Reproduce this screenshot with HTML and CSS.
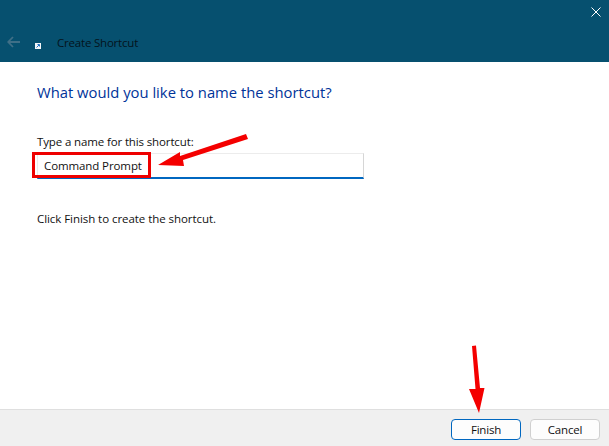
FILE: index.html
```html
<!DOCTYPE html>
<html lang="en">
<head>
    <meta charset="UTF-8">
    <meta name="viewport" content="width=device-width, initial-scale=1.0">
    <title>Create Shortcut</title>
    <link rel="stylesheet" href="styles.css">
</head>
<body>
    <header class="titlebar">
        <div class="close-row">
            <svg class="close-icon" width="10" height="10" viewBox="0 0 10 10"><path d="M0.5 0.5L9.5 9.5M9.5 0.5L0.5 9.5" stroke="#fff" stroke-width="1" fill="none"/></svg>
        </div>
        <div class="nav-row">
            <svg class="back-icon" width="13" height="12" viewBox="0 0 13 12"><path d="M6 1L1.200 6L6 11M1.200 6H13" stroke="#3f6f87" stroke-width="1.800" fill="none"/></svg>
            <svg class="app-icon" width="6" height="6" viewBox="0 0 6 6"><rect width="6" height="6" fill="#f4f6f8"/><path d="M1.500 4.500L4 2M2.500 1.500H4.500V3.500" stroke="#1b6fc2" stroke-width="1" fill="none"/></svg>
            <span class="window-title">Create Shortcut</span>
        </div>
    </header>

    <main class="content">
        <h1>What would you like to name the shortcut?</h1>
        <label class="name-label" for="name">Type a name for this shortcut:</label>
        <input class="name-input" type="text" id="name" value="Command Prompt">
        <p class="hint">Click Finish to create the shortcut.</p>
    </main>

    <footer class="actions">
        <button class="btn btn-default">Finish</button>
        <button class="btn">Cancel</button>
    </footer>

    <!-- red annotations on top of the dialog -->
    <div class="highlight"></div>
    <svg class="marks" width="609" height="446" viewBox="0 0 609 446">
        <path d="M246 134L248 139L183 160L184 166L158 165L180 152L180 156Z" fill="#f40000"/>
        <path d="M472 346L476 345.500L480 388L484.500 388L479 413L469 389L475.500 389Z" fill="#f40000"/>
    </svg>
</body>
</html>
```

FILE: styles.css
```css
body {
    font-family: "Open Sans", "Noto Sans", sans-serif;
    margin: 0;
    padding: 0;
    display: flex;
    flex-direction: column;
    height: 446px;
    overflow: hidden;
    background-color: #fff;
    color: #111;
}
.titlebar {
    height: 62px;
    display: flex;
    flex-direction: column;
    justify-content: space-between;
    background-color: #06506f;
    padding: 7px 8px 13px 7px;
    box-sizing: border-box;
}
.close-row {
    display: flex;
    justify-content: flex-end;
}
.nav-row {
    display: flex;
    align-items: center;
    height: 14px;
}
.back-icon {
    margin-right: 15px;
}
.app-icon {
    margin-top: 8px;
    margin-right: 16px;
}
.window-title {
    font-size: 11.500px;
    letter-spacing: -0.200px;
    color: #04131c;
}
.content {
    flex: 1;
    padding: 20px 0 0 37px;
}
h1 {
    font-size: 14.800px;
    font-weight: 400;
    color: #003399;
    margin: 0 0 32px;
    line-height: 20px;
}
.name-label {
    display: block;
    font-size: 11.500px;
    letter-spacing: -0.130px;
    line-height: 16px;
    margin-bottom: 3px;
}
.name-input {
    display: block;
    width: 327px;
    height: 26px;
    box-sizing: border-box;
    padding: 0 6px;
    border: 1px solid #ececec;
    border-right-color: #d6d6d6;
    border-bottom: 2px solid #0067c0;
    font-family: inherit;
    font-size: 11.500px;
    letter-spacing: -0.100px;
    color: #111;
    outline: none;
}
.hint {
    font-size: 11.500px;
    letter-spacing: -0.060px;
    line-height: 16px;
    margin: 32px 0 0;
}
.actions {
    height: 37px;
    box-sizing: border-box;
    display: flex;
    justify-content: flex-end;
    align-items: flex-start;
    gap: 9px;
    padding: 9px 9px 0 0;
    background-color: #f0f0f0;
    border-top: 1px solid #dfdfdf;
}
.btn {
    width: 70px;
    height: 21px;
    padding: 0;
    font-family: inherit;
    font-size: 11.500px;
    letter-spacing: -0.200px;
    color: #111;
    background-color: #fdfdfd;
    border: 1px solid #d0d0d0;
    border-radius: 4px;
}
.btn-default {
    border-color: #0067c0;
}
.highlight {
    position: absolute;
    left: 32px;
    top: 152px;
    width: 113px;
    height: 20px;
    border: 3px solid #ee0000;
}
.marks {
    position: absolute;
    left: 0;
    top: 0;
}
```
